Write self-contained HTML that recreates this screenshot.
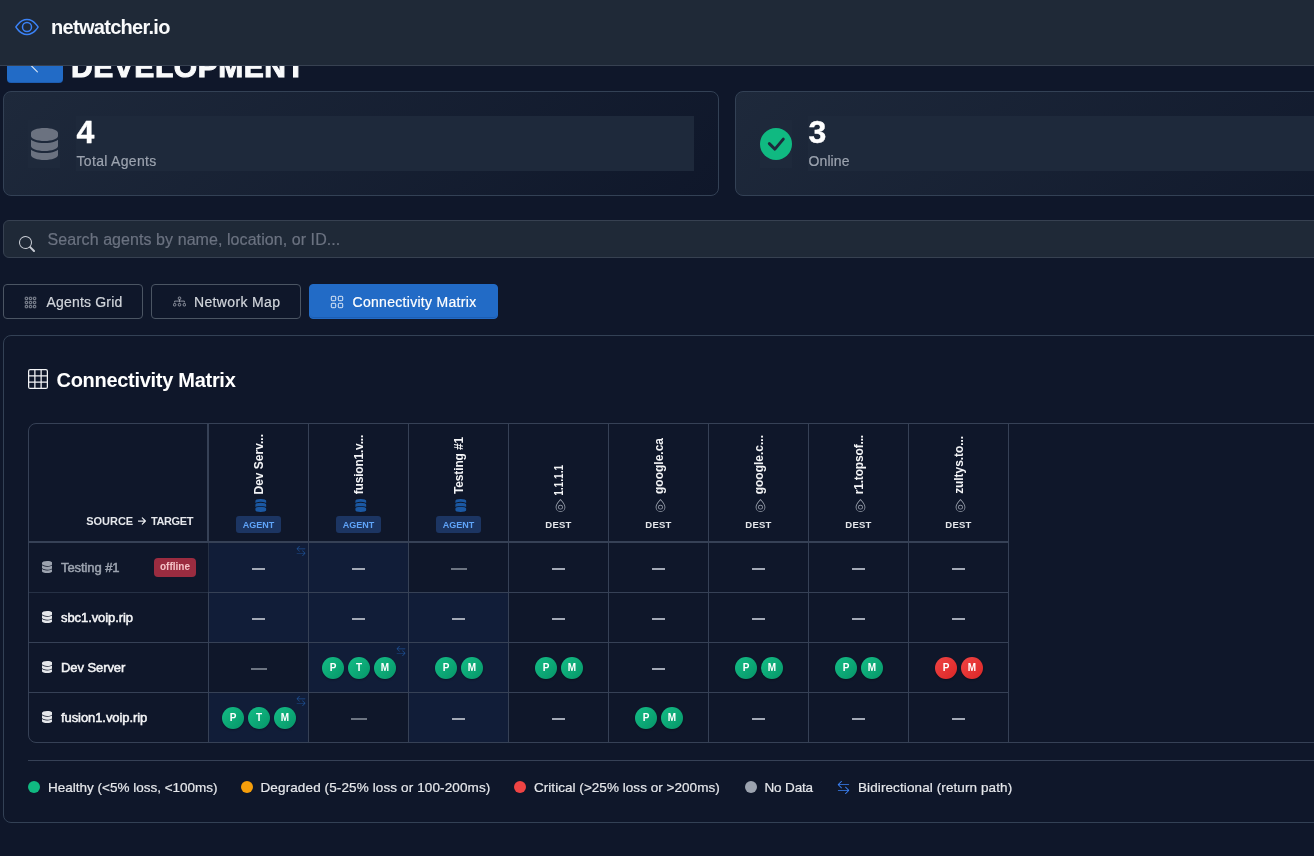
<!DOCTYPE html><html><head><meta charset="utf-8"><title>netwatcher.io</title><style>
*{box-sizing:border-box;margin:0;padding:0}
html,body{width:1314px;height:856px;overflow:hidden;background:#0f172a}
body{font-family:"Liberation Sans",sans-serif;color:#f3f4f6;position:relative}
#root{position:absolute;left:0;top:0;width:1314px;height:856px;overflow:hidden;will-change:transform}
.abs{position:absolute}
svg{display:block;position:absolute}
.hdr{left:0;top:0;width:1314px;height:66px;background:#1f2937;border-bottom:1px solid #374151;z-index:10}
.brand{left:51px;top:15px;font-size:20px;font-weight:700;letter-spacing:-0.7px;line-height:24px;color:#f9fafb;white-space:nowrap}
.back{left:7px;top:40px;width:56px;height:43px;background:#226bc6;border-radius:4px;box-shadow:inset 0 -1px 0 rgba(0,0,40,.12)}
.title{left:71px;top:49.600px;font-size:30px;font-weight:700;line-height:34px;letter-spacing:.55px;-webkit-text-stroke:1px #f9fafb;color:#f9fafb;white-space:nowrap}
.card{top:91px;width:716px;height:105px;border:1px solid #334155;border-radius:8px;background:linear-gradient(135deg,#1e293b 0%,#0f172a 100%)}
.ibox{left:24px;top:28px;width:32px;height:48px;background:#1e293b}
.tbox{left:72px;top:24px;height:55px;background:#1e293b}
.num{left:.5px;top:-2px;font-size:32px;font-weight:700;line-height:36px;color:#fff;-webkit-text-stroke:.4px #fff}
.lbl{left:0.5px;top:36px;font-size:14px;line-height:18px;letter-spacing:.32px;color:#9ca3af;-webkit-text-stroke:.2px currentColor;white-space:nowrap}
.search{left:3px;top:220px;width:1500px;height:38px;background:#1f2937;border:1px solid #374151;border-radius:6px}
.ph{left:43.5px;top:9px;font-size:16px;line-height:20px;letter-spacing:.07px;color:#6b7280;-webkit-text-stroke:.2px currentColor;white-space:nowrap}
.tab{top:284px;height:35px;border:1px solid #4b5563;border-radius:4px;color:#d1d5db;font-size:14px;line-height:33px;white-space:nowrap}
.tab.act{background:#226bc6;border-color:#226bc6;color:#fff;box-shadow:inset 0 -1px 0 rgba(0,0,40,.12)}
.tab span{position:absolute;top:1px;-webkit-text-stroke:.2px currentColor}
.panel{left:3px;top:335px;width:1500px;height:488px;border:1px solid #334155;border-radius:8px;background:#0f172a}
.ptitle{left:56.500px;top:367.700px;font-size:20px;font-weight:700;line-height:24px;letter-spacing:-0.29px;color:#fff;white-space:nowrap}
.tw{left:28px;top:423px;width:1500px;height:320px;border:1px solid #364156;border-radius:8px;overflow:hidden}
.vl{width:1px;background:#364156}
.hl{height:1px;background:#364156}
.cell{width:99px;height:49px}
.cell.hi{background:#111d38}
.dash{left:42.800px;width:13.600px;top:25px;height:2px;background:#a3a9b6}
.dash.self{left:41.300px;width:16.400px;left:41.600px;background:#6d7582}
.circ{width:22px;height:22px;border-radius:50%;top:14px;color:#fff;font-size:10px;font-weight:700;line-height:22px;text-align:center;background:linear-gradient(135deg,#14bd86,#069668);box-shadow:0 1px 2px rgba(0,0,0,.3)}
.circ.red{background:linear-gradient(135deg,#ef4444,#dc2626)}
.st{left:0;font-size:11px;font-weight:700;letter-spacing:-.1px;color:#e5e7eb;white-space:nowrap;line-height:12px}
.vt{writing-mode:vertical-rl;transform:rotate(180deg);font-size:12px;font-weight:700;color:#f3f4f6;white-space:nowrap;line-height:14px}
.badge{font-size:9px;font-weight:700;letter-spacing:.05px;line-height:17px;text-align:center;white-space:nowrap}
.badge.ag{width:45px;height:17px;line-height:18.500px;background:#1c3562;color:#60a5fa;border-radius:3px}
.badge.de{color:#e5e7eb;width:99px;letter-spacing:.25px;font-size:9.500px}
.rname{left:32px;font-size:13px;font-weight:400;line-height:16px;white-space:nowrap;color:#f3f4f6;letter-spacing:-0.08px;-webkit-text-stroke:.5px currentColor}
.off{left:125px;top:15px;width:42px;height:19px;background:#9b2c40;color:#f5c2c7;font-size:10px;font-weight:700;border-radius:4px;line-height:18px;text-align:center}
.lg{top:779.600px;font-size:13.500px;line-height:16px;-webkit-text-stroke:.2px currentColor;color:#e5e7eb;white-space:nowrap}
.dot{top:781px;width:12px;height:12px;border-radius:50%}
</style></head><body><div id="root">
<div class="abs back"><svg viewBox="0 0 16 16" style="left:20px;top:17.500px;width:16px;height:16px;position:absolute"><path d="M10.400 2.100 L4.500 8 L10.400 13.900" fill="none" stroke="#dbe7f7" stroke-width="1.100" stroke-linecap="round"/></svg></div>
<div class="abs title">DEVELOPMENT</div>
<div class="abs hdr">
<svg viewBox="0 0 16 16" style="left:15px;top:15px;width:24px;height:24px;color:#3b82f6"><g fill="currentColor"><path d="M16 8s-3-5.500-8-5.500S0 8 0 8s3 5.500 8 5.500S16 8 16 8M1.173 8a13 13 0 0 1 1.660-2.043C4.120 4.668 5.880 3.500 8 3.500s3.879 1.168 5.168 2.457A13 13 0 0 1 14.828 8q-.086.130-.195.288c-.335.480-.830 1.120-1.465 1.755C11.879 11.332 10.119 12.500 8 12.500s-3.879-1.168-5.168-2.457A13 13 0 0 1 1.172 8z"/><path d="M8 5.500a2.500 2.500 0 1 0 0 5 2.500 2.500 0 0 0 0-5M4.500 8a3.500 3.500 0 1 1 7 0 3.500 3.500 0 0 1-7 0"/></g></svg>
<div class="abs brand">netwatcher.io</div>
</div>
<div class="abs card" style="left:3px">
<div class="abs ibox"><svg class="" viewBox="0 0 448 512" preserveAspectRatio="none" style="left:2.500px;top:8px;width:27px;height:32px;color:#6b7280"><path fill="currentColor" d="M448 80v48c0 44.200-100.300 80-224 80S0 172.200 0 128V80C0 35.800 100.300 0 224 0S448 35.800 448 80zM393.200 214.700c20.800-7.400 39.900-16.900 54.800-28.600V288c0 44.200-100.300 80-224 80S0 332.200 0 288V186.100c14.900 11.800 34 21.200 54.800 28.600C99.700 230.700 159.500 240 224 240s124.300-9.300 169.200-25.300zM0 346.100c14.900 11.800 34 21.200 54.800 28.600C99.700 390.700 159.500 400 224 400s124.300-9.300 169.200-25.300c20.800-7.400 39.900-16.900 54.800-28.600V432c0 44.200-100.300 80-224 80S0 476.200 0 432V346.100z"/></svg></div>
<div class="abs tbox" style="width:618px"><div class="abs num">4</div><div class="abs lbl">Total Agents</div></div>
</div>
<div class="abs card" style="left:735px">
<div class="abs ibox"><svg viewBox="0 0 32 32" style="left:0;top:8px;width:32px;height:32px"><circle cx="16" cy="16" r="16" fill="#10b981"/><path d="M9.300 15.600L14.900 21.100L23.300 11.100" fill="none" stroke="#1e293b" stroke-width="2.900" stroke-linecap="round" stroke-linejoin="round"/></svg></div>
<div class="abs tbox" style="width:618px"><div class="abs num">3</div><div class="abs lbl" style="letter-spacing:.1px">Online</div></div>
</div>
<div class="abs search"><svg viewBox="0 0 16 16" style="left:15px;top:15px;width:16px;height:16px;color:#c6cad2"><path fill="currentColor" d="M11.742 10.344a6.500 6.500 0 1 0-1.397 1.398h-.001q.044.060.098.115l3.850 3.850a1 1 0 0 0 1.415-1.414l-3.850-3.850a1 1 0 0 0-.115-.100zM12 6.500a5.500 5.500 0 1 1-11 0 5.500 5.500 0 0 1 11 0"/></svg><div class="abs ph">Search agents by name, location, or ID...</div></div>
<div class="abs tab" style="left:3px;width:140px"><svg viewBox="0 0 16 16" style="left:20.400px;top:10.500px;width:13px;height:13px;color:#a7adb8"><rect x="1.5" y="1.5" width="3" height="3" rx=".6" fill="none" stroke="currentColor" stroke-width="1"/><rect x="1.5" y="6.5" width="3" height="3" rx=".6" fill="none" stroke="currentColor" stroke-width="1"/><rect x="1.5" y="11.5" width="3" height="3" rx=".6" fill="none" stroke="currentColor" stroke-width="1"/><rect x="6.5" y="1.5" width="3" height="3" rx=".6" fill="none" stroke="currentColor" stroke-width="1"/><rect x="6.5" y="6.5" width="3" height="3" rx=".6" fill="none" stroke="currentColor" stroke-width="1"/><rect x="6.5" y="11.5" width="3" height="3" rx=".6" fill="none" stroke="currentColor" stroke-width="1"/><rect x="11.5" y="1.5" width="3" height="3" rx=".6" fill="none" stroke="currentColor" stroke-width="1"/><rect x="11.5" y="6.5" width="3" height="3" rx=".6" fill="none" stroke="currentColor" stroke-width="1"/><rect x="11.5" y="11.5" width="3" height="3" rx=".6" fill="none" stroke="currentColor" stroke-width="1"/></svg><span style="left:42.500px;letter-spacing:.18px">Agents Grid</span></div>
<div class="abs tab" style="left:151px;width:150px"><svg viewBox="0 0 16 16" style="left:21px;top:10px;width:13px;height:13px;color:#a7adb8"><g fill="none" stroke="currentColor" stroke-width="1"><rect x="6.500" y="2.500" width="3" height="3" rx="1"/><rect x=".5" y="10.500" width="3" height="3" rx="1"/><rect x="6.500" y="10.500" width="3" height="3" rx="1"/><rect x="12.500" y="10.500" width="3" height="3" rx="1"/><path d="M8 6v2.500M2 8.700V7.500h12v1.200" stroke-linecap="round"/></g></svg><span style="left:42px;letter-spacing:.35px">Network Map</span></div>
<div class="abs tab act" style="left:309px;width:189px"><svg viewBox="0 0 16 16" style="left:20.300px;top:9.800px;width:14px;height:14px;color:#fff"><rect x="1.5" y="1.5" width="5" height="5" rx="1" fill="none" stroke="currentColor" stroke-width="1"/><rect x="1.5" y="9.5" width="5" height="5" rx="1" fill="none" stroke="currentColor" stroke-width="1"/><rect x="9.5" y="1.5" width="5" height="5" rx="1" fill="none" stroke="currentColor" stroke-width="1"/><rect x="9.5" y="9.5" width="5" height="5" rx="1" fill="none" stroke="currentColor" stroke-width="1"/></svg><span style="left:42.500px;letter-spacing:.3px">Connectivity Matrix</span></div>
<div class="abs panel"></div>
<svg viewBox="0 0 16 16" style="left:28px;top:369px;width:20px;height:20px;color:#f3f4f6"><g fill="none" stroke="currentColor" stroke-width="1"><rect x=".5" y=".5" width="15" height="15" rx="1.200"/><path d="M5.500 .5v15M10.500 .5v15M.5 5.500h15M.5 10.500h15"/></g></svg>
<div class="abs ptitle">Connectivity Matrix</div>
<div class="abs tw">
<div class="abs vl" style="left:178px;top:0;width:2px;height:119px"></div>
<div class="abs vl" style="left:179px;top:119px;height:199px"></div>
<div class="abs vl" style="left:179px;top:119px;height:49px;background:#263145"></div>
<div class="abs vl" style="left:279px;top:0;height:318px"></div>
<div class="abs vl" style="left:379px;top:0;height:318px"></div>
<div class="abs vl" style="left:479px;top:0;height:318px"></div>
<div class="abs vl" style="left:579px;top:0;height:318px"></div>
<div class="abs vl" style="left:679px;top:0;height:318px"></div>
<div class="abs vl" style="left:779px;top:0;height:318px"></div>
<div class="abs vl" style="left:879px;top:0;height:318px"></div>
<div class="abs vl" style="left:979px;top:0;height:318px"></div>
<div class="abs hl" style="left:0;top:117px;width:980px;height:2px"></div>
<div class="abs hl" style="left:0;top:168px;width:980px"></div>
<div class="abs hl" style="left:0;top:218px;width:980px"></div>
<div class="abs hl" style="left:0;top:268px;width:980px"></div>
<div class="abs hl" style="left:0;top:168px;width:179px;background:#263145"></div>
<div class="abs st" style="left:57.300px;top:90.700px;letter-spacing:-.05px">SOURCE</div>
<svg viewBox="0 0 8 8" style="left:109px;top:93.200px;width:8px;height:8px"><path d="M.3 4h7M4.300 .9l3.100 3.100-3.100 3.100" fill="none" stroke="#e5e7eb" stroke-width="1.250" stroke-linecap="round" stroke-linejoin="round"/></svg>
<div class="abs st" style="left:122px;top:90.700px;letter-spacing:-.4px">TARGET</div>
<div class="abs vt" style="left:223px;bottom:248px;letter-spacing:0px">Dev Serv...</div>
<svg class="" viewBox="0 0 448 512" preserveAspectRatio="none" style="left:226px;top:75px;width:11.400px;height:13px;color:#1b58a2;transform:rotate(180deg)"><path fill="currentColor" d="M448 80v48c0 44.200-100.300 80-224 80S0 172.200 0 128V80C0 35.800 100.300 0 224 0S448 35.800 448 80zM393.200 214.700c20.800-7.400 39.900-16.900 54.800-28.600V288c0 44.200-100.300 80-224 80S0 332.200 0 288V186.100c14.900 11.800 34 21.200 54.800 28.600C99.700 230.700 159.500 240 224 240s124.300-9.300 169.200-25.300zM0 346.100c14.900 11.800 34 21.200 54.800 28.600C99.700 390.700 159.500 400 224 400s124.300-9.300 169.200-25.300c20.800-7.400 39.900-16.900 54.800-28.600V432c0 44.200-100.300 80-224 80S0 476.200 0 432V346.100z"/></svg>
<div class="abs badge ag" style="left:207px;top:92px">AGENT</div>
<div class="abs vt" style="left:323px;bottom:248px;letter-spacing:-0.22px">fusion1.v...</div>
<svg class="" viewBox="0 0 448 512" preserveAspectRatio="none" style="left:326px;top:75px;width:11.400px;height:13px;color:#1b58a2;transform:rotate(180deg)"><path fill="currentColor" d="M448 80v48c0 44.200-100.300 80-224 80S0 172.200 0 128V80C0 35.800 100.300 0 224 0S448 35.800 448 80zM393.200 214.700c20.800-7.400 39.900-16.900 54.800-28.600V288c0 44.200-100.300 80-224 80S0 332.200 0 288V186.100c14.900 11.800 34 21.200 54.800 28.600C99.700 230.700 159.500 240 224 240s124.300-9.300 169.200-25.300zM0 346.100c14.900 11.800 34 21.200 54.800 28.600C99.700 390.700 159.500 400 224 400s124.300-9.300 169.200-25.300c20.800-7.400 39.900-16.900 54.800-28.600V432c0 44.200-100.300 80-224 80S0 476.200 0 432V346.100z"/></svg>
<div class="abs badge ag" style="left:307px;top:92px">AGENT</div>
<div class="abs vt" style="left:423px;bottom:248px;letter-spacing:-0.15px">Testing #1</div>
<svg class="" viewBox="0 0 448 512" preserveAspectRatio="none" style="left:426px;top:75px;width:11.400px;height:13px;color:#1b58a2;transform:rotate(180deg)"><path fill="currentColor" d="M448 80v48c0 44.200-100.300 80-224 80S0 172.200 0 128V80C0 35.800 100.300 0 224 0S448 35.800 448 80zM393.200 214.700c20.800-7.400 39.900-16.900 54.800-28.600V288c0 44.200-100.300 80-224 80S0 332.200 0 288V186.100c14.900 11.800 34 21.200 54.800 28.600C99.700 230.700 159.500 240 224 240s124.300-9.300 169.200-25.300zM0 346.100c14.900 11.800 34 21.200 54.800 28.600C99.700 390.700 159.500 400 224 400s124.300-9.300 169.200-25.300c20.800-7.400 39.900-16.900 54.800-28.600V432c0 44.200-100.300 80-224 80S0 476.200 0 432V346.100z"/></svg>
<div class="abs badge ag" style="left:407px;top:92px">AGENT</div>
<div class="abs vt" style="left:523px;bottom:243.6px;transform:rotate(180deg) scaleY(.845)">1.1.1.1</div>
<svg viewBox="0 0 16 16" style="left:525px;top:75px;width:13px;height:13px;color:#9ca3af;transform:rotate(180deg)"><g fill="currentColor"><path d="M12.166 8.940c-.524 1.062-1.234 2.120-1.960 3.070A32 32 0 0 1 8 14.580a32 32 0 0 1-2.206-2.570c-.726-.950-1.436-2.008-1.960-3.070C3.304 7.867 3 6.862 3 6a5 5 0 0 1 10 0c0 .862-.305 1.867-.834 2.940M8 16s6-5.686 6-10A6 6 0 0 0 2 6c0 4.314 6 10 6 10"/><path d="M8 8a2 2 0 1 1 0-4 2 2 0 0 1 0 4m0 1a3 3 0 1 0 0-6 3 3 0 0 0 0 6"/></g></svg>
<div class="abs badge de" style="left:480px;top:92px">DEST</div>
<div class="abs vt" style="left:623px;bottom:248px;letter-spacing:0px">google.ca</div>
<svg viewBox="0 0 16 16" style="left:625px;top:75px;width:13px;height:13px;color:#9ca3af;transform:rotate(180deg)"><g fill="currentColor"><path d="M12.166 8.940c-.524 1.062-1.234 2.120-1.960 3.070A32 32 0 0 1 8 14.580a32 32 0 0 1-2.206-2.570c-.726-.950-1.436-2.008-1.960-3.070C3.304 7.867 3 6.862 3 6a5 5 0 0 1 10 0c0 .862-.305 1.867-.834 2.940M8 16s6-5.686 6-10A6 6 0 0 0 2 6c0 4.314 6 10 6 10"/><path d="M8 8a2 2 0 1 1 0-4 2 2 0 0 1 0 4m0 1a3 3 0 1 0 0-6 3 3 0 0 0 0 6"/></g></svg>
<div class="abs badge de" style="left:580px;top:92px">DEST</div>
<div class="abs vt" style="left:723px;bottom:248px;letter-spacing:0px">google.c...</div>
<svg viewBox="0 0 16 16" style="left:725px;top:75px;width:13px;height:13px;color:#9ca3af;transform:rotate(180deg)"><g fill="currentColor"><path d="M12.166 8.940c-.524 1.062-1.234 2.120-1.960 3.070A32 32 0 0 1 8 14.580a32 32 0 0 1-2.206-2.570c-.726-.950-1.436-2.008-1.960-3.070C3.304 7.867 3 6.862 3 6a5 5 0 0 1 10 0c0 .862-.305 1.867-.834 2.940M8 16s6-5.686 6-10A6 6 0 0 0 2 6c0 4.314 6 10 6 10"/><path d="M8 8a2 2 0 1 1 0-4 2 2 0 0 1 0 4m0 1a3 3 0 1 0 0-6 3 3 0 0 0 0 6"/></g></svg>
<div class="abs badge de" style="left:680px;top:92px">DEST</div>
<div class="abs vt" style="left:823px;bottom:248px;letter-spacing:-0.17px">r1.topsof...</div>
<svg viewBox="0 0 16 16" style="left:825px;top:75px;width:13px;height:13px;color:#9ca3af;transform:rotate(180deg)"><g fill="currentColor"><path d="M12.166 8.940c-.524 1.062-1.234 2.120-1.960 3.070A32 32 0 0 1 8 14.580a32 32 0 0 1-2.206-2.570c-.726-.950-1.436-2.008-1.960-3.070C3.304 7.867 3 6.862 3 6a5 5 0 0 1 10 0c0 .862-.305 1.867-.834 2.940M8 16s6-5.686 6-10A6 6 0 0 0 2 6c0 4.314 6 10 6 10"/><path d="M8 8a2 2 0 1 1 0-4 2 2 0 0 1 0 4m0 1a3 3 0 1 0 0-6 3 3 0 0 0 0 6"/></g></svg>
<div class="abs badge de" style="left:780px;top:92px">DEST</div>
<div class="abs vt" style="left:923px;bottom:248px;letter-spacing:-0.07px">zultys.to...</div>
<svg viewBox="0 0 16 16" style="left:925px;top:75px;width:13px;height:13px;color:#9ca3af;transform:rotate(180deg)"><g fill="currentColor"><path d="M12.166 8.940c-.524 1.062-1.234 2.120-1.960 3.070A32 32 0 0 1 8 14.580a32 32 0 0 1-2.206-2.570c-.726-.950-1.436-2.008-1.960-3.070C3.304 7.867 3 6.862 3 6a5 5 0 0 1 10 0c0 .862-.305 1.867-.834 2.940M8 16s6-5.686 6-10A6 6 0 0 0 2 6c0 4.314 6 10 6 10"/><path d="M8 8a2 2 0 1 1 0-4 2 2 0 0 1 0 4m0 1a3 3 0 1 0 0-6 3 3 0 0 0 0 6"/></g></svg>
<div class="abs badge de" style="left:880px;top:92px">DEST</div>
<div class="abs" style="left:0;top:119px;width:178px;height:49px">
<svg class="" viewBox="0 0 448 512" preserveAspectRatio="none" style="left:13px;top:18px;width:10.300px;height:12px;color:#9ca3af"><path fill="currentColor" d="M448 80v48c0 44.200-100.300 80-224 80S0 172.200 0 128V80C0 35.800 100.300 0 224 0S448 35.800 448 80zM393.200 214.700c20.800-7.400 39.900-16.900 54.800-28.600V288c0 44.200-100.300 80-224 80S0 332.200 0 288V186.100c14.900 11.800 34 21.200 54.800 28.600C99.700 230.700 159.500 240 224 240s124.300-9.300 169.200-25.300zM0 346.100c14.900 11.800 34 21.200 54.800 28.600C99.700 390.700 159.500 400 224 400s124.300-9.300 169.200-25.300c20.800-7.400 39.900-16.900 54.800-28.600V432c0 44.200-100.300 80-224 80S0 476.200 0 432V346.100z"/></svg>
<div class="abs rname" style="top:17px;color:#9ca3af">Testing #1</div>
<div class="abs off">offline</div>
</div>
<div class="abs cell hi" style="left:180px;top:119px">
<div class="abs dash"></div>
<svg viewBox="0 0 16 16" style="left:87.400px;top:3px;width:10px;height:10px;color:#1d4f92"><path fill="currentColor" fill-rule="evenodd" d="M1 11.500a.5.5 0 0 0 .5.5h11.793l-3.147 3.146a.5.5 0 0 0 .708.708l4-4a.5.5 0 0 0 0-.708l-4-4a.5.5 0 0 0-.708.708L13.293 11H1.500a.5.5 0 0 0-.5.5m14-7a.5.5 0 0 1-.5.5H2.707l3.147 3.146a.5.5 0 1 1-.708.708l-4-4a.5.5 0 0 1 0-.708l4-4a.5.5 0 1 1 .708.708L2.707 4H14.500a.5.5 0 0 1 .5.5"/></svg>
</div>
<div class="abs cell hi" style="left:280px;top:119px">
<div class="abs dash"></div>
</div>
<div class="abs cell" style="left:380px;top:119px">
<div class="abs dash self"></div>
</div>
<div class="abs cell" style="left:480px;top:119px">
<div class="abs dash"></div>
</div>
<div class="abs cell" style="left:580px;top:119px">
<div class="abs dash"></div>
</div>
<div class="abs cell" style="left:680px;top:119px">
<div class="abs dash"></div>
</div>
<div class="abs cell" style="left:780px;top:119px">
<div class="abs dash"></div>
</div>
<div class="abs cell" style="left:880px;top:119px">
<div class="abs dash"></div>
</div>
<div class="abs" style="left:0;top:169px;width:178px;height:49px">
<svg class="" viewBox="0 0 448 512" preserveAspectRatio="none" style="left:13px;top:18px;width:10.300px;height:12px;color:#e5e7eb"><path fill="currentColor" d="M448 80v48c0 44.200-100.300 80-224 80S0 172.200 0 128V80C0 35.800 100.300 0 224 0S448 35.800 448 80zM393.200 214.700c20.800-7.400 39.900-16.900 54.800-28.600V288c0 44.200-100.300 80-224 80S0 332.200 0 288V186.100c14.900 11.800 34 21.200 54.800 28.600C99.700 230.700 159.500 240 224 240s124.300-9.300 169.200-25.300zM0 346.100c14.900 11.800 34 21.200 54.800 28.600C99.700 390.700 159.500 400 224 400s124.300-9.300 169.200-25.300c20.800-7.400 39.900-16.900 54.800-28.600V432c0 44.200-100.300 80-224 80S0 476.200 0 432V346.100z"/></svg>
<div class="abs rname" style="top:17px;color:#f3f4f6">sbc1.voip.rip</div>
</div>
<div class="abs cell hi" style="left:180px;top:169px">
<div class="abs dash"></div>
</div>
<div class="abs cell hi" style="left:280px;top:169px">
<div class="abs dash"></div>
</div>
<div class="abs cell hi" style="left:380px;top:169px">
<div class="abs dash"></div>
</div>
<div class="abs cell" style="left:480px;top:169px">
<div class="abs dash"></div>
</div>
<div class="abs cell" style="left:580px;top:169px">
<div class="abs dash"></div>
</div>
<div class="abs cell" style="left:680px;top:169px">
<div class="abs dash"></div>
</div>
<div class="abs cell" style="left:780px;top:169px">
<div class="abs dash"></div>
</div>
<div class="abs cell" style="left:880px;top:169px">
<div class="abs dash"></div>
</div>
<div class="abs" style="left:0;top:219px;width:178px;height:49px">
<svg class="" viewBox="0 0 448 512" preserveAspectRatio="none" style="left:13px;top:18px;width:10.300px;height:12px;color:#e5e7eb"><path fill="currentColor" d="M448 80v48c0 44.200-100.300 80-224 80S0 172.200 0 128V80C0 35.800 100.300 0 224 0S448 35.800 448 80zM393.200 214.700c20.800-7.400 39.900-16.900 54.800-28.600V288c0 44.200-100.300 80-224 80S0 332.200 0 288V186.100c14.900 11.800 34 21.200 54.800 28.600C99.700 230.700 159.500 240 224 240s124.300-9.300 169.200-25.300zM0 346.100c14.900 11.800 34 21.200 54.800 28.600C99.700 390.700 159.500 400 224 400s124.300-9.300 169.200-25.300c20.800-7.400 39.900-16.900 54.800-28.600V432c0 44.200-100.300 80-224 80S0 476.200 0 432V346.100z"/></svg>
<div class="abs rname" style="top:17px;color:#f3f4f6">Dev Server</div>
</div>
<div class="abs cell" style="left:180px;top:219px">
<div class="abs dash self"></div>
</div>
<div class="abs cell hi" style="left:280px;top:219px">
<div class="abs circ" style="left:13.0px">P</div>
<div class="abs circ" style="left:39.0px">T</div>
<div class="abs circ" style="left:65.0px">M</div>
<svg viewBox="0 0 16 16" style="left:87.400px;top:3px;width:10px;height:10px;color:#1d4f92"><path fill="currentColor" fill-rule="evenodd" d="M1 11.500a.5.5 0 0 0 .5.5h11.793l-3.147 3.146a.5.5 0 0 0 .708.708l4-4a.5.5 0 0 0 0-.708l-4-4a.5.5 0 0 0-.708.708L13.293 11H1.500a.5.5 0 0 0-.5.5m14-7a.5.5 0 0 1-.5.5H2.707l3.147 3.146a.5.5 0 1 1-.708.708l-4-4a.5.5 0 0 1 0-.708l4-4a.5.5 0 1 1 .708.708L2.707 4H14.500a.5.5 0 0 1 .5.5"/></svg>
</div>
<div class="abs cell hi" style="left:380px;top:219px">
<div class="abs circ" style="left:26.0px">P</div>
<div class="abs circ" style="left:52.0px">M</div>
</div>
<div class="abs cell" style="left:480px;top:219px">
<div class="abs circ" style="left:26.0px">P</div>
<div class="abs circ" style="left:52.0px">M</div>
</div>
<div class="abs cell" style="left:580px;top:219px">
<div class="abs dash"></div>
</div>
<div class="abs cell" style="left:680px;top:219px">
<div class="abs circ" style="left:26.0px">P</div>
<div class="abs circ" style="left:52.0px">M</div>
</div>
<div class="abs cell" style="left:780px;top:219px">
<div class="abs circ" style="left:26.0px">P</div>
<div class="abs circ" style="left:52.0px">M</div>
</div>
<div class="abs cell" style="left:880px;top:219px">
<div class="abs circ red" style="left:26.0px">P</div>
<div class="abs circ red" style="left:52.0px">M</div>
</div>
<div class="abs" style="left:0;top:269px;width:178px;height:49px">
<svg class="" viewBox="0 0 448 512" preserveAspectRatio="none" style="left:13px;top:18px;width:10.300px;height:12px;color:#e5e7eb"><path fill="currentColor" d="M448 80v48c0 44.200-100.300 80-224 80S0 172.200 0 128V80C0 35.800 100.300 0 224 0S448 35.800 448 80zM393.200 214.700c20.800-7.400 39.900-16.900 54.800-28.600V288c0 44.200-100.300 80-224 80S0 332.200 0 288V186.100c14.900 11.800 34 21.200 54.800 28.600C99.700 230.700 159.500 240 224 240s124.300-9.300 169.200-25.300zM0 346.100c14.900 11.800 34 21.200 54.800 28.600C99.700 390.700 159.500 400 224 400s124.300-9.300 169.200-25.300c20.800-7.400 39.900-16.900 54.800-28.600V432c0 44.200-100.300 80-224 80S0 476.200 0 432V346.100z"/></svg>
<div class="abs rname" style="top:17px;color:#f3f4f6">fusion1.voip.rip</div>
</div>
<div class="abs cell hi" style="left:180px;top:269px">
<div class="abs circ" style="left:13.0px">P</div>
<div class="abs circ" style="left:39.0px">T</div>
<div class="abs circ" style="left:65.0px">M</div>
<svg viewBox="0 0 16 16" style="left:87.400px;top:3px;width:10px;height:10px;color:#1d4f92"><path fill="currentColor" fill-rule="evenodd" d="M1 11.500a.5.5 0 0 0 .5.5h11.793l-3.147 3.146a.5.5 0 0 0 .708.708l4-4a.5.5 0 0 0 0-.708l-4-4a.5.5 0 0 0-.708.708L13.293 11H1.500a.5.5 0 0 0-.5.5m14-7a.5.5 0 0 1-.5.5H2.707l3.147 3.146a.5.5 0 1 1-.708.708l-4-4a.5.5 0 0 1 0-.708l4-4a.5.5 0 1 1 .708.708L2.707 4H14.500a.5.5 0 0 1 .5.5"/></svg>
</div>
<div class="abs cell" style="left:280px;top:269px">
<div class="abs dash self"></div>
</div>
<div class="abs cell hi" style="left:380px;top:269px">
<div class="abs dash"></div>
</div>
<div class="abs cell" style="left:480px;top:269px">
<div class="abs dash"></div>
</div>
<div class="abs cell" style="left:580px;top:269px">
<div class="abs circ" style="left:26.0px">P</div>
<div class="abs circ" style="left:52.0px">M</div>
</div>
<div class="abs cell" style="left:680px;top:269px">
<div class="abs dash"></div>
</div>
<div class="abs cell" style="left:780px;top:269px">
<div class="abs dash"></div>
</div>
<div class="abs cell" style="left:880px;top:269px">
<div class="abs dash"></div>
</div>
</div>
<div class="abs hl" style="left:28px;top:760px;width:1500px"></div>
<div class="abs dot" style="left:28px;background:#10b981"></div><div class="abs lg" style="left:48px;letter-spacing:0px">Healthy (&lt;5% loss, &lt;100ms)</div>
<div class="abs dot" style="left:241px;background:#f59e0b"></div><div class="abs lg" style="left:260.5px;letter-spacing:0.12px">Degraded (5-25% loss or 100-200ms)</div>
<div class="abs dot" style="left:514px;background:#ef4444"></div><div class="abs lg" style="left:534px;letter-spacing:0.04px">Critical (&gt;25% loss or &gt;200ms)</div>
<div class="abs dot" style="left:745px;background:#9ca3af"></div><div class="abs lg" style="left:764.5px;letter-spacing:-0.15px">No Data</div>
<svg viewBox="0 0 16 16" style="left:837px;top:780.500px;width:13px;height:13px;color:#3b82f6"><path fill="currentColor" fill-rule="evenodd" d="M1 11.500a.5.5 0 0 0 .5.5h11.793l-3.147 3.146a.5.5 0 0 0 .708.708l4-4a.5.5 0 0 0 0-.708l-4-4a.5.5 0 0 0-.708.708L13.293 11H1.500a.5.5 0 0 0-.5.5m14-7a.5.5 0 0 1-.5.5H2.707l3.147 3.146a.5.5 0 1 1-.708.708l-4-4a.5.5 0 0 1 0-.708l4-4a.5.5 0 1 1 .708.708L2.707 4H14.500a.5.5 0 0 1 .5.5"/></svg>
<div class="abs lg" style="left:858px;letter-spacing:.1px">Bidirectional (return path)</div>
</div></body></html>
